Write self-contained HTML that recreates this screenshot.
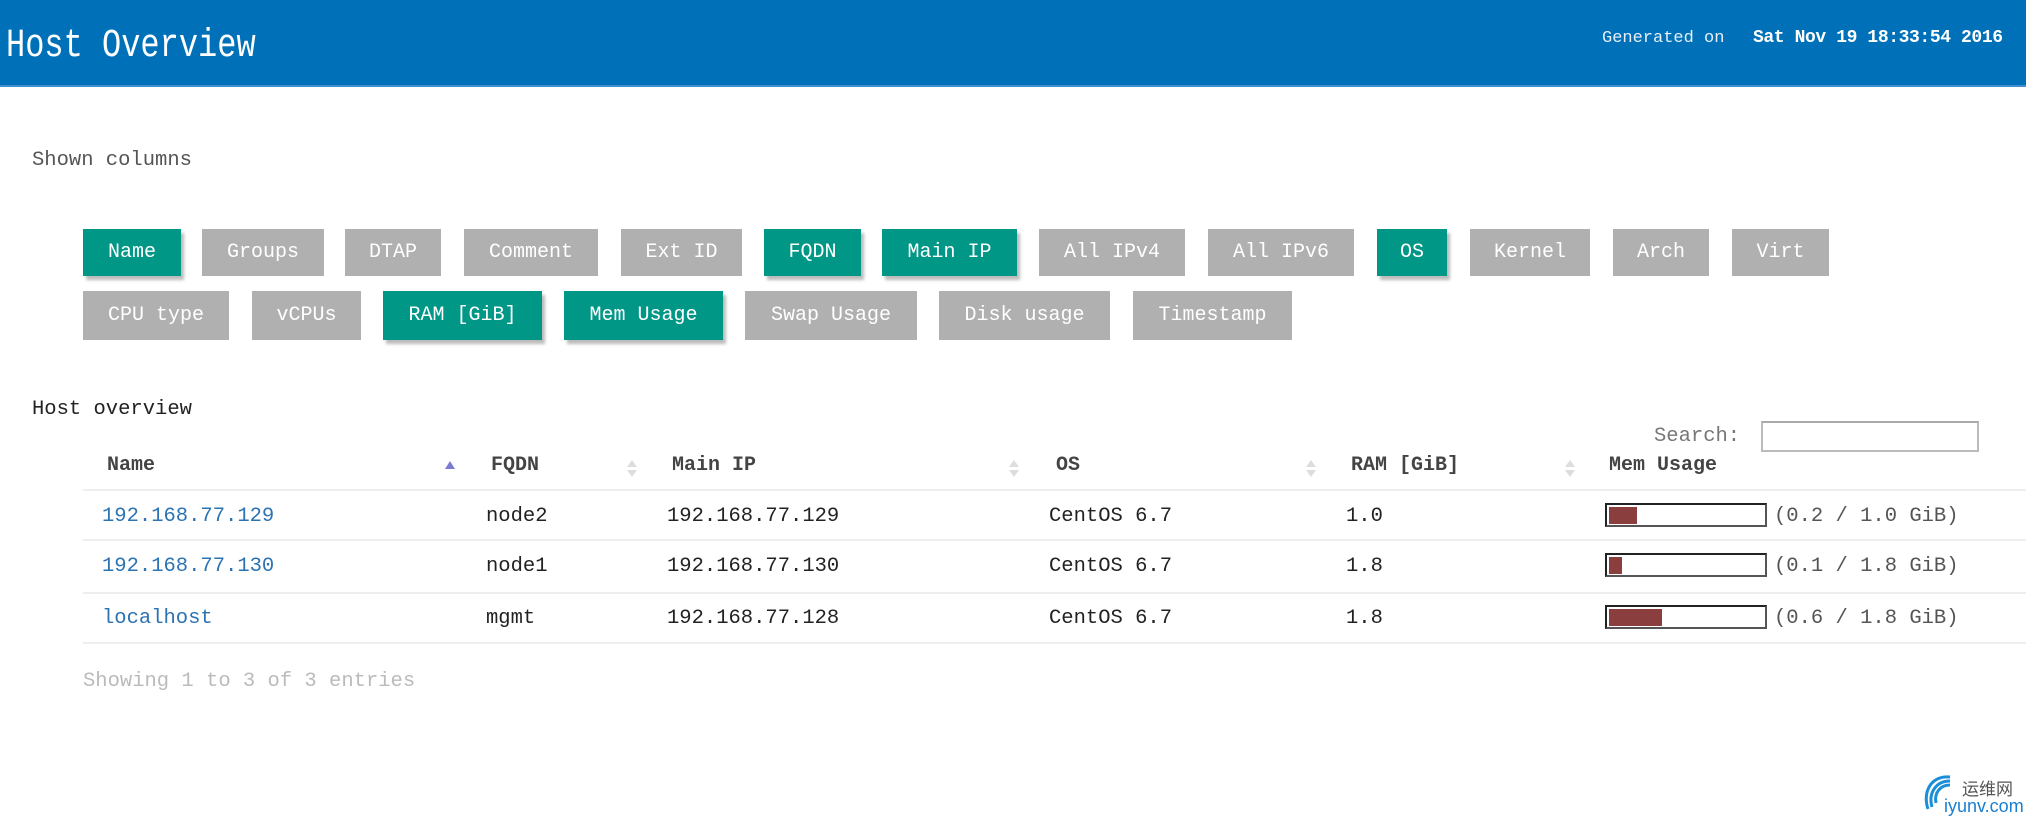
<!DOCTYPE html>
<html><head><meta charset="utf-8">
<style>
*{margin:0;padding:0;box-sizing:border-box}
body{width:2026px;height:822px;background:#fff;position:relative;overflow:hidden;font-family:"Liberation Mono","Noto Sans CJK SC",monospace;color:#222}
.a{position:absolute;white-space:nowrap}
.hdr{position:absolute;left:0;top:0;width:2026px;height:87px;background:#0071b9;border-bottom:2px solid #3d8fd0}
.b{position:absolute;height:47px;line-height:47px;text-align:center;color:#fff;font-size:20px;background:#b0b0b0}
.g{background:#009786;box-shadow:3px 4px 3px #bbb}
.r2{top:291px;height:49px;line-height:49px}
.r1{top:229px}
.th{font-weight:bold;font-size:20px;color:#444;top:454px}
.ar{position:absolute;width:0;height:0;border-left:5px solid transparent;border-right:5px solid transparent}
.line{position:absolute;left:83px;width:1943px;height:2px;background:#eee}
.td{font-size:20.5px;color:#222}
.bar{position:absolute;left:1605px;width:162px;height:24px;border:2px solid #222;border-right-color:#555;border-bottom-color:#555;background:#fff}
.bar i{position:absolute;left:2px;top:2px;height:17px;background:#8b3e3e}
</style></head><body>
<div class="hdr"></div>
<div class="a" style="left:6px;top:22px;font-size:32px;color:#fff;transform:scaleY(1.25);transform-origin:top left">Host Overview</div>
<div class="a" style="left:1602px;top:29px;font-size:17px;color:#e8eef5">Generated on</div>
<div class="a" style="left:1753px;top:28px;font-size:18px;color:#fff;font-weight:bold;letter-spacing:-0.4px">Sat Nov 19 18:33:54 2016</div>

<div class="a" style="left:32px;top:149px;font-size:20.5px;color:#555">Shown columns</div>

<div class="b r1 g" style="left:83px;width:98px">Name</div>
<div class="b r1" style="left:202px;width:122px">Groups</div>
<div class="b r1" style="left:345px;width:96px">DTAP</div>
<div class="b r1" style="left:464px;width:134px">Comment</div>
<div class="b r1" style="left:621px;width:121px">Ext ID</div>
<div class="b r1 g" style="left:764px;width:97px">FQDN</div>
<div class="b r1 g" style="left:882px;width:135px">Main IP</div>
<div class="b r1" style="left:1039px;width:146px">All IPv4</div>
<div class="b r1" style="left:1208px;width:146px">All IPv6</div>
<div class="b r1 g" style="left:1377px;width:70px">OS</div>
<div class="b r1" style="left:1470px;width:120px">Kernel</div>
<div class="b r1" style="left:1613px;width:96px">Arch</div>
<div class="b r1" style="left:1732px;width:97px">Virt</div>

<div class="b r2" style="left:83px;width:146px">CPU type</div>
<div class="b r2" style="left:252px;width:109px">vCPUs</div>
<div class="b r2 g" style="left:383px;width:159px">RAM [GiB]</div>
<div class="b r2 g" style="left:564px;width:159px">Mem Usage</div>
<div class="b r2" style="left:745px;width:172px">Swap Usage</div>
<div class="b r2" style="left:939px;width:171px">Disk usage</div>
<div class="b r2" style="left:1133px;width:159px">Timestamp</div>

<div class="a" style="left:32px;top:398px;font-size:20.5px;color:#222">Host overview</div>
<div class="a" style="left:1654px;top:425px;font-size:20.5px;color:#777">Search:</div>
<div class="a" style="left:1761px;top:421px;width:218px;height:31px;border:2px solid #bbb;border-top-color:#aaa"></div>

<div class="a th" style="left:107px">Name</div>
<div class="ar" style="left:445px;top:461px;border-bottom:8px solid #7b7bd6"></div>
<div class="a th" style="left:491px">FQDN</div>
<div class="a th" style="left:672px">Main IP</div>
<div class="a th" style="left:1056px">OS</div>
<div class="a th" style="left:1351px">RAM [GiB]</div>
<div class="a th" style="left:1609px">Mem Usage</div>
<div class="ar" style="left:627px;top:460px;border-bottom:7px solid #ddd"></div><div class="ar" style="left:627px;top:470px;border-top:7px solid #ddd"></div>
<div class="ar" style="left:1009px;top:460px;border-bottom:7px solid #ddd"></div><div class="ar" style="left:1009px;top:470px;border-top:7px solid #ddd"></div>
<div class="ar" style="left:1306px;top:460px;border-bottom:7px solid #ddd"></div><div class="ar" style="left:1306px;top:470px;border-top:7px solid #ddd"></div>
<div class="ar" style="left:1565px;top:460px;border-bottom:7px solid #ddd"></div><div class="ar" style="left:1565px;top:470px;border-top:7px solid #ddd"></div>

<div class="line" style="top:489px"></div>
<div class="line" style="top:539px"></div>
<div class="line" style="top:592px"></div>
<div class="line" style="top:642px"></div>

<div class="a td" style="left:102px;top:505px;color:#2b73b3">192.168.77.129</div>
<div class="a td" style="left:486px;top:505px">node2</div>
<div class="a td" style="left:667px;top:505px">192.168.77.129</div>
<div class="a td" style="left:1049px;top:505px">CentOS 6.7</div>
<div class="a td" style="left:1346px;top:505px">1.0</div>
<div class="bar" style="top:503px"><i style="width:28px"></i></div>
<div class="a td" style="left:1774px;top:505px;color:#555">(0.2 / 1.0 GiB)</div>

<div class="a td" style="left:102px;top:555px;color:#2b73b3">192.168.77.130</div>
<div class="a td" style="left:486px;top:555px">node1</div>
<div class="a td" style="left:667px;top:555px">192.168.77.130</div>
<div class="a td" style="left:1049px;top:555px">CentOS 6.7</div>
<div class="a td" style="left:1346px;top:555px">1.8</div>
<div class="bar" style="top:553px"><i style="width:13px"></i></div>
<div class="a td" style="left:1774px;top:555px;color:#555">(0.1 / 1.8 GiB)</div>

<div class="a td" style="left:102px;top:607px;color:#2b73b3">localhost</div>
<div class="a td" style="left:486px;top:607px">mgmt</div>
<div class="a td" style="left:667px;top:607px">192.168.77.128</div>
<div class="a td" style="left:1049px;top:607px">CentOS 6.7</div>
<div class="a td" style="left:1346px;top:607px">1.8</div>
<div class="bar" style="top:605px"><i style="width:53px"></i></div>
<div class="a td" style="left:1774px;top:607px;color:#555">(0.6 / 1.8 GiB)</div>

<div class="a td" style="left:83px;top:670px;color:#bbb">Showing 1 to 3 of 3 entries</div>

<svg class="a" style="left:1920px;top:773px" width="40" height="46" viewBox="0 0 40 46"><path d="M30 4 C12 2 2 18 8 36 M30 8 C16 8 8 20 12 34 M30 12 C20 12 14 20 16 30" fill="none" stroke="#1a8fd8" stroke-width="3"/></svg>
<div class="a" style="left:1962px;top:775px;font-size:17px;color:#555;font-family:'Noto Sans CJK SC',sans-serif">运维网</div>
<div class="a" style="left:1944px;top:796px;font-size:18px;color:#1a7fd0;font-family:'Liberation Sans',sans-serif">iyunv.com</div>
</body></html>
